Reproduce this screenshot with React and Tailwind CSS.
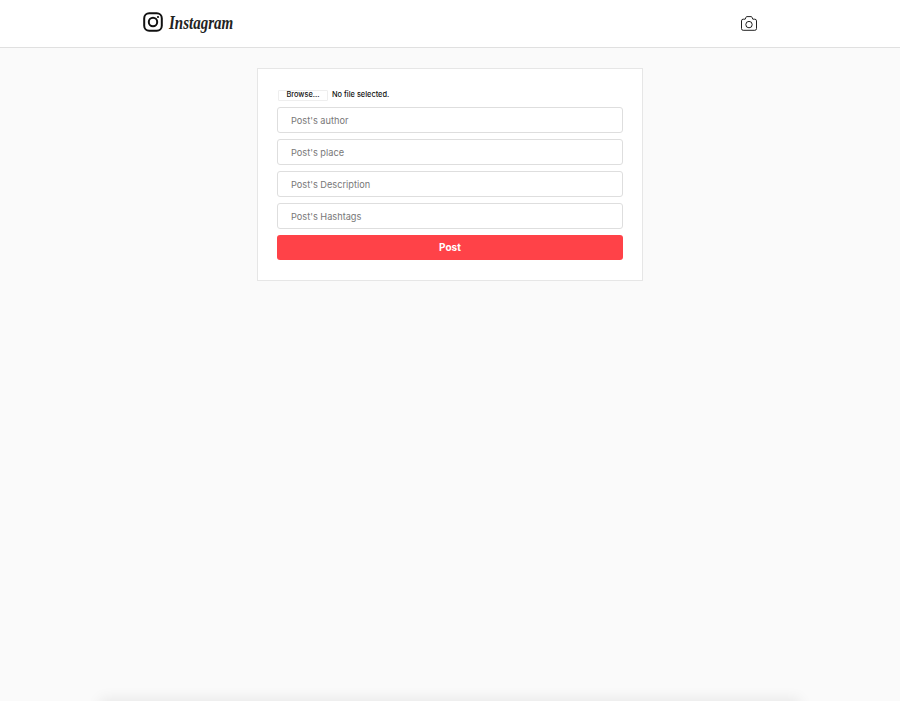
import React from 'react';

function Logo() {
  return (
    <svg width="20" height="20" viewBox="0 0 20 20" fill="none" stroke="#111" className="shrink-0">
      <rect x="1.2" y="1.2" width="17.6" height="17.6" rx="5" strokeWidth="2" />
      <circle cx="10" cy="10" r="4.2" strokeWidth="2" />
      <circle cx="15" cy="5" r="1.1" fill="#111" stroke="none" />
    </svg>
  );
}

function Camera() {
  return (
    <svg width="16" height="15" viewBox="0 0 16 15" fill="none" stroke="#222" strokeWidth="1" className="-mt-[2px]">
      <path d="M2.2 3.2h2l.8-1.9q.2-.7.9-.7h4.2q.7 0 .9.7l.8 1.9h2a1.7 1.7 0 0 1 1.7 1.7v7.7a1.7 1.7 0 0 1-1.7 1.7H2.2a1.7 1.7 0 0 1-1.7-1.7V4.9a1.7 1.7 0 0 1 1.7-1.7z" />
      <circle cx="8" cy="8.6" r="3.2" />
    </svg>
  );
}

const fields = ["Post's author", "Post's place", "Post's Description", "Post's Hashtags"];

export default function App() {
  return (
    <div className="h-[701px] bg-[#fafafa] font-['Inter',sans-serif] flex flex-col overflow-hidden relative">
      <header className="h-12 shrink-0 bg-white border-b border-[#e0e0e0] flex justify-center">
        <div className="w-[614px] flex items-center justify-between pt-px">
          <div className="flex items-center gap-[6px] -mt-1">
            <Logo />
            <span className="font-['Liberation_Serif',serif] italic font-bold text-[15px] text-[#222] scale-y-125 mt-[2px]">Instagram</span>
          </div>
          <Camera />
        </div>
      </header>
      <main className="flex justify-center pt-5">
        <form className="w-[386px] h-[213px] bg-white border border-[#e6e6e6] px-[19px] pt-[16px] flex flex-col">
          <div className="h-5 flex items-center gap-[4px] text-[7.4px] font-medium text-[#111]">
            <span className="w-[50px] h-[11px] ml-px border border-[#eee] rounded-[1px] flex items-center justify-center">Browse...</span>
            <span>No file selected.</span>
          </div>
          <div className="mt-[2px] flex flex-col gap-[6px]">
            {fields.map((f) => (
              <div key={f} className="h-[26px] border border-[#dedede] rounded-[3px] flex items-center px-[13px] pt-px text-[9.2px] text-[#777]">
                {f}
              </div>
            ))}
            <button type="button" className="h-[25px] bg-[#ff4248] rounded-[3px] text-white text-[10px] font-bold">Post</button>
          </div>
        </form>
      </main>
      <div className="absolute left-[104px] right-[104px] -bottom-[12px] h-[10px] shadow-[0_0_14px_4px_rgba(0,0,0,0.08)]"></div>
    </div>
  );
}
